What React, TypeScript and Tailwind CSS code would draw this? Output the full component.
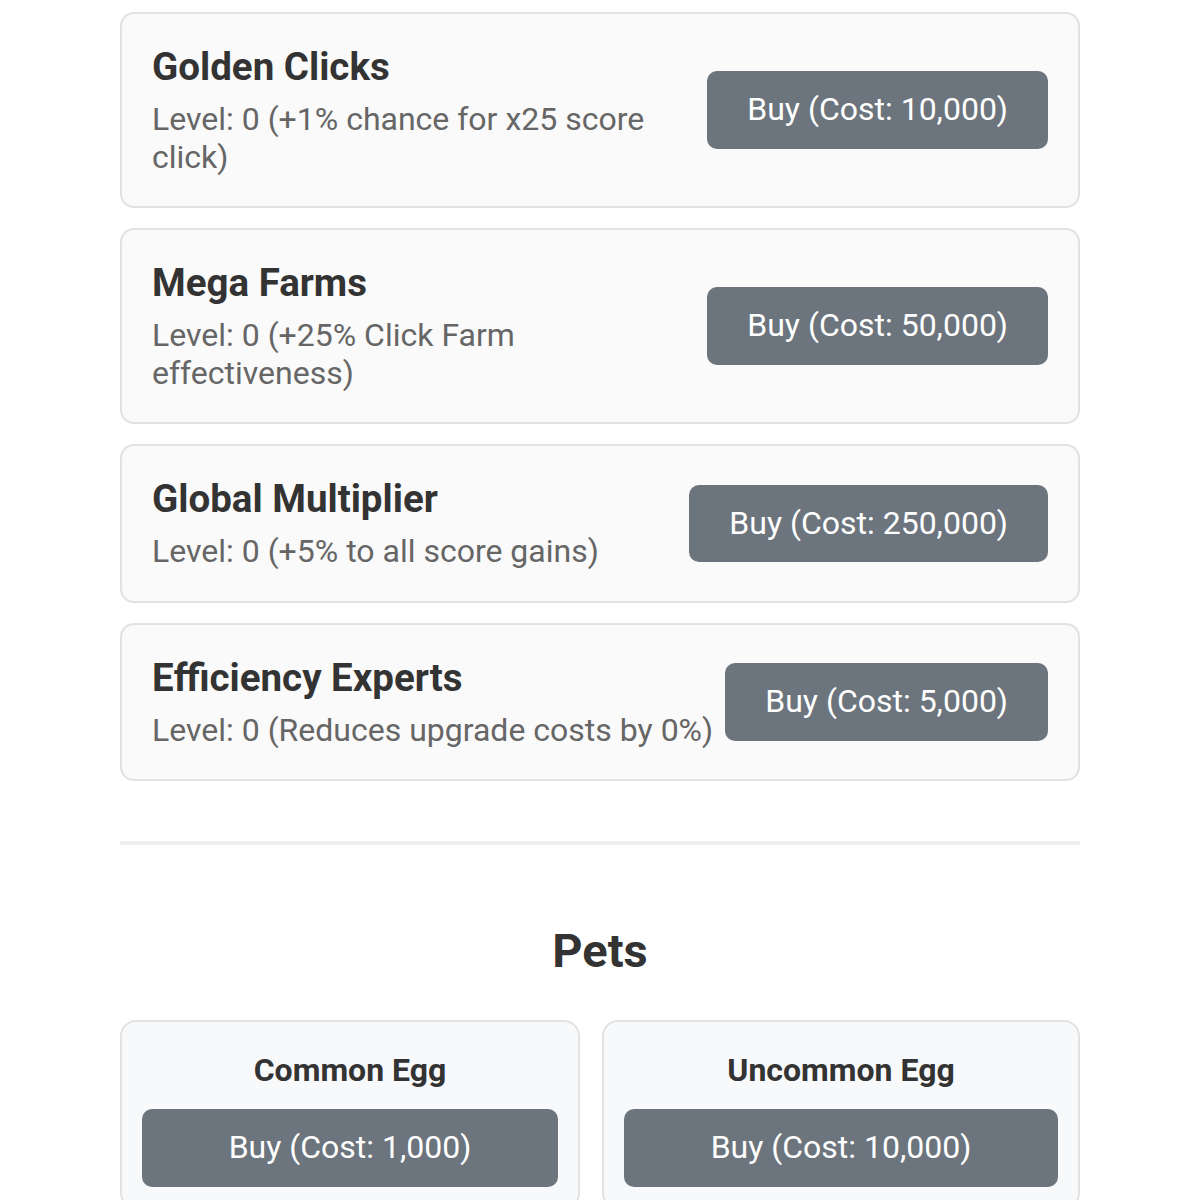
import React from 'react'

interface Upgrade {
  name: string
  desc: string
  cost: string
}

const upgrades: Upgrade[] = [
  { name: 'Golden Clicks', desc: 'Level: 0 (+1% chance for x25 score click)', cost: '10,000' },
  { name: 'Mega Farms', desc: 'Level: 0 (+25% Click Farm effectiveness)', cost: '50,000' },
  { name: 'Global Multiplier', desc: 'Level: 0 (+5% to all score gains)', cost: '250,000' },
  { name: 'Efficiency Experts', desc: 'Level: 0 (Reduces upgrade costs by 0%)', cost: '5,000' }
]

const eggs = [
  { name: 'Common Egg', cost: '1,000' },
  { name: 'Uncommon Egg', cost: '10,000' }
]

export default function App() {
  return (
    <div className="min-h-screen bg-white font-['Roboto',_'Liberation_Sans',_sans-serif]">
      <div className="w-[960px] mx-auto pt-3">
        {/* Upgrades */}
        <div className="flex flex-col gap-5">
          {upgrades.map((u) => (
            <div
              key={u.name}
              className="flex items-center border-2 border-[#e2e2e2] bg-[#fafafa] rounded-[14px] p-[30px]"
            >
              <div className="flex-1 min-w-0">
                <h3 className="text-[38.5px] leading-[1.172] font-bold text-[#333]">{u.name}</h3>
                <p className="mt-3 text-[32px] leading-[1.172] text-[#666]">{u.desc}</p>
              </div>
              <button className="ml-3 shrink-0 bg-[#6c757d] text-white text-[32px] leading-[1.172] px-10 py-5 rounded-[10px]">
                Buy (Cost: {u.cost})
              </button>
            </div>
          ))}
        </div>

        {/* Divider */}
        <div className="mt-[60px] h-1 bg-[#eeeeee]"></div>

        {/* Pets */}
        <h2 className="mt-[78px] text-center text-[47px] leading-[1.172] font-bold text-[#333]">Pets</h2>

        <div className="mt-[41px] flex flex-wrap gap-[22px]">
          {eggs.map((e) => (
            <div
              key={e.name}
              className="flex-auto border-2 border-[#e2e2e2] bg-[#f8f9fa] rounded-[16px] px-5 pt-[30px] pb-5"
            >
              <h4 className="text-center text-[32px] leading-[1.172] font-bold text-[#333]">{e.name}</h4>
              <button className="mt-5 w-full bg-[#6c757d] text-white text-[32px] leading-[1.172] px-10 py-5 rounded-[10px]">
                Buy (Cost: {e.cost})
              </button>
            </div>
          ))}
        </div>
      </div>
    </div>
  )
}
